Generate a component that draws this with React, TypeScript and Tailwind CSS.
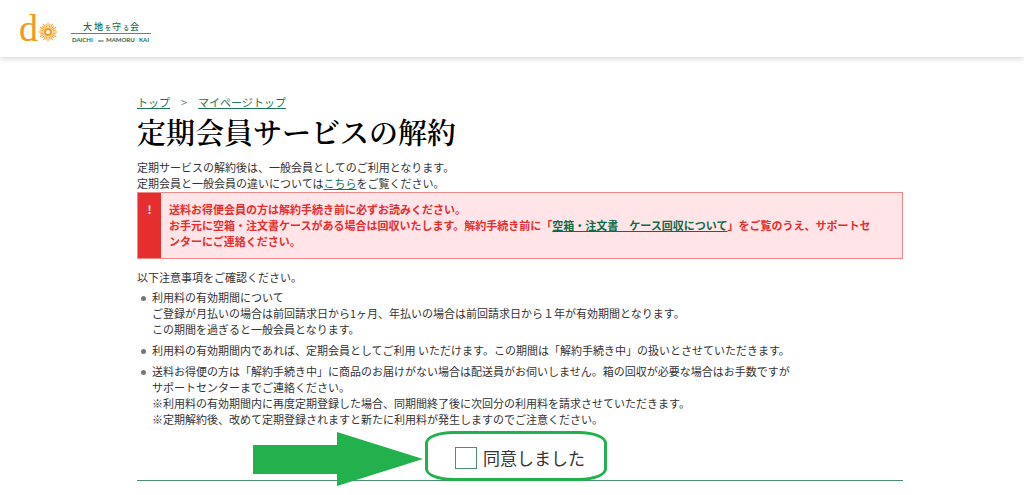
import type { ReactNode } from "react";

const RAYS = Array.from({ length: 24 }, (_, i) => i * 15);

function Logo() {
  return (
    <svg width="136" height="48" viewBox="0 0 136 48" role="img" aria-label="大地を守る会">
      <text x="0" y="36" fill="#f39a1a" fontSize="38" fontFamily="'Liberation Serif', serif">
        d
      </text>
      {/* Sun */}
      <g stroke="#f5a22d" strokeWidth="1" strokeLinecap="round">
        {RAYS.map((angle) => (
          <line
            key={angle}
            x1="29"
            y1="22"
            x2="29"
            y2={angle % 30 === 0 ? "18" : "19"}
            transform={`rotate(${angle} 29 27)`}
          />
        ))}
      </g>
      <circle cx="29" cy="27" r="3" fill="#fff" stroke="#f39a1a" strokeWidth="2" />
      {/* Wordmark */}
      <g fill="#1d6b4a" fontFamily="'Noto Sans CJK JP', sans-serif" fontWeight="500">
        <text y="25" fontSize="9">
          <tspan x="64">大</tspan>
          <tspan x="75">地</tspan>
          <tspan x="86" fontSize="6">を</tspan>
          <tspan x="93">守</tspan>
          <tspan x="104" fontSize="6">る</tspan>
          <tspan x="111">会</tspan>
        </text>
      </g>
      <path d="M52 28.5H132" stroke="#4c8f73" strokeWidth="1" />
      <g fill="#1d6b4a" fontFamily="Lato, sans-serif">
        <text y="37" fontSize="6" fontWeight="700">
          <tspan x="53">DAICHI</tspan>
          <tspan x="79" fontSize="4">wo</tspan>
          <tspan x="87">MAMORU</tspan>
          <tspan x="120">KAI</tspan>
        </text>
      </g>
    </svg>
  );
}

function TextLink({ children }: { children: ReactNode }) {
  return (
    <a href="#" className="text-[#1b7554] underline underline-offset-1">
      {children}
    </a>
  );
}

function Note({ children }: { children: ReactNode }) {
  return (
    <li className="flex gap-[6px]">
      <span className="mt-[7px] ml-1 size-[5px] shrink-0 rounded-full bg-[#777]" />
      <div>{children}</div>
    </li>
  );
}

export default function App() {
  return (
    <div className="bg-white font-['Noto_Sans_CJK_JP',sans-serif] text-[11px] leading-4 text-[#333]">
      <header className="flex h-[57px] items-center pl-[19px] shadow-[0_2px_5px_rgba(0,0,0,0.15)]">
        <a href="#">
          <Logo />
        </a>
      </header>

      <main className="mx-auto max-w-[782px] pt-[37px] pb-4 pl-4">
        <nav aria-label="パンくず" className="flex gap-[11px]">
          <TextLink>トップ</TextLink>
          <span className="text-[#777]">&gt;</span>
          <TextLink>マイページトップ</TextLink>
        </nav>

        <h1 className="mt-1 mb-[9px] font-['Noto_Serif_CJK_JP','Noto_Sans_CJK_JP',serif] text-[29px] leading-9 font-semibold text-black">
          定期会員サービスの解約
        </h1>

        <p>
          定期サービスの解約後は、一般会員としてのご利用となります。
          <br />
          定期会員と一般会員の違いについては<TextLink>こちら</TextLink>をご覧ください。
        </p>

        {/* Warning */}
        <div className="mt-px flex border border-[#ee8a8a] bg-[#ffe5e7] font-bold text-[#e52e2e]">
          <div className="w-[23px] shrink-0 bg-[#e52e2e] pt-2 text-center text-white">!</div>
          <p className="pt-2 pr-6 pb-[9px] pl-2">
            送料お得便会員の方は解約手続き前に必ずお読みください。
            <br />
            お手元に空箱・注文書ケースがある場合は回収いたします。解約手続き前に「
            <a href="#" className="text-[#0d6b47] underline underline-offset-1">
              空箱・注文書　ケース回収について
            </a>
            」をご覧のうえ、サポートセンターにご連絡ください。
          </p>
        </div>

        <p className="mt-[10px]">以下注意事項をご確認ください。</p>

        <ul className="mt-1 flex flex-col gap-[5px]">
          <Note>
            利用料の有効期間について
            <br />
            ご登録が月払いの場合は前回請求日から1ヶ月、年払いの場合は前回請求日から１年が有効期間となります。
            <br />
            この期間を過ぎると一般会員となります。
          </Note>
          <Note>
            利用料の有効期間内であれば、定期会員としてご利用 いただけます。この期間は「解約手続き中」の扱いとさせていただきます。
          </Note>
          <Note>
            送料お得便の方は「解約手続き中」に商品のお届けがない場合は配送員がお伺いしません。箱の回収が必要な場合はお手数ですが
            <br />
            サポートセンターまでご連絡ください。
            <br />
            ※利用料の有効期間内に再度定期登録した場合、同期間終了後に次回分の利用料を請求させていただきます。
            <br />
            ※定期解約後、改めて定期登録されますと新たに利用料が発生しますのでご注意ください。
          </Note>
        </ul>

        {/* Agreement */}
        <div className="mt-[19px] flex justify-center border-b border-[#4c8f73] pb-[10px]">
          <div className="relative">
            <label htmlFor="agree" className="flex items-center gap-[6px] text-[17px] leading-6">
              <input
                id="agree"
                type="checkbox"
                className="size-[22px] appearance-none border border-[#4c8f73] bg-white checked:bg-[#1b7554]"
              />
              同意しました
            </label>
            <div className="pointer-events-none absolute -top-[15px] -right-[22px] -bottom-[11px] -left-[30px] rounded-[28px/12px] border-3 border-[#22b14c]" />
            <svg
              width="170"
              height="56"
              viewBox="0 0 170 56"
              fill="#22b14c"
              aria-hidden="true"
              className="pointer-events-none absolute -top-[15px] right-full mr-8"
            >
              <path d="M0 14H84V1L170 28L84 55V43H0Z" />
            </svg>
          </div>
        </div>
      </main>
    </div>
  );
}
